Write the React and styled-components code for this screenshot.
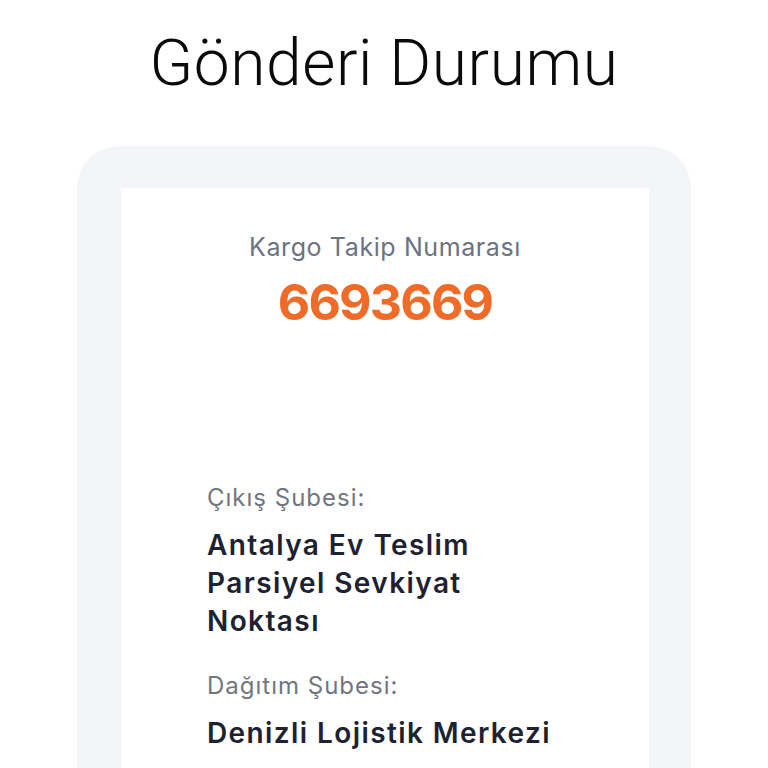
import React from 'react';
import styled, { createGlobalStyle } from 'styled-components';

const Global = createGlobalStyle`
  html, body {
    margin: 0;
    padding: 0;
    background: #ffffff;
  }
  body {
    font-family: Inter, "Noto Sans", sans-serif;
    overflow: hidden;
  }
`;

const Page = styled.div`
  width: 768px;
  height: 768px;
  display: flex;
  flex-direction: column;
  align-items: center;
  overflow: hidden;
`;

const Title = styled.h1`
  margin: 22px 0 0;
  font-family: Roboto, sans-serif;
  font-weight: 300;
  font-size: 64px;
  line-height: 84px;
  color: #0a0a0a;
  letter-spacing: 0.6px;
`;

const Card = styled.div`
  margin-top: 40px;
  width: 614px;
  box-sizing: border-box;
  padding: 42px 42px 0 44px;
  background: #f4f5f8;
  border-radius: 42px 42px 0 0;
  flex: 1;
  display: flex;
`;

const Panel = styled.div`
  flex: 1;
  background: #ffffff;
  padding: 41px 86px 0;
  display: flex;
  flex-direction: column;
`;

const Tracking = styled.div`
  display: flex;
  flex-direction: column;
  align-items: center;
  gap: 7px;
`;

const TrackingLabel = styled.div`
  font-size: 25px;
  line-height: 36px;
  color: #6b7280;
  letter-spacing: 0.6px;
`;

const TrackingNumber = styled.div`
  font-size: 50px;
  line-height: 60px;
  font-weight: 700;
  color: #f06a28;
  letter-spacing: -1.8px;
`;

const Details = styled.div`
  margin-top: 150px;
  display: flex;
  flex-direction: column;
  gap: 30px;
`;

const Field = styled.div`
  display: flex;
  flex-direction: column;
  gap: 12px;
`;

const FieldLabel = styled.div`
  font-size: 24px;
  line-height: 32px;
  color: #71767e;
  letter-spacing: 1px;
`;

const FieldValue = styled.div`
  font-size: 28px;
  line-height: 38px;
  font-weight: 600;
  color: #1e2230;
  letter-spacing: 1.4px;
`;

export default function App() {
  return (
    <Page>
      <Global />
      <Title>Gönderi Durumu</Title>
      <Card>
        <Panel>
          <Tracking>
            <TrackingLabel>Kargo Takip Numarası</TrackingLabel>
            <TrackingNumber>6693669</TrackingNumber>
          </Tracking>
          <Details>
            <Field>
              <FieldLabel>Çıkış Şubesi:</FieldLabel>
              <FieldValue>Antalya Ev Teslim Parsiyel Sevkiyat Noktası</FieldValue>
            </Field>
            <Field>
              <FieldLabel>Dağıtım Şubesi:</FieldLabel>
              <FieldValue>Denizli Lojistik Merkezi</FieldValue>
            </Field>
          </Details>
        </Panel>
      </Card>
    </Page>
  );
}
